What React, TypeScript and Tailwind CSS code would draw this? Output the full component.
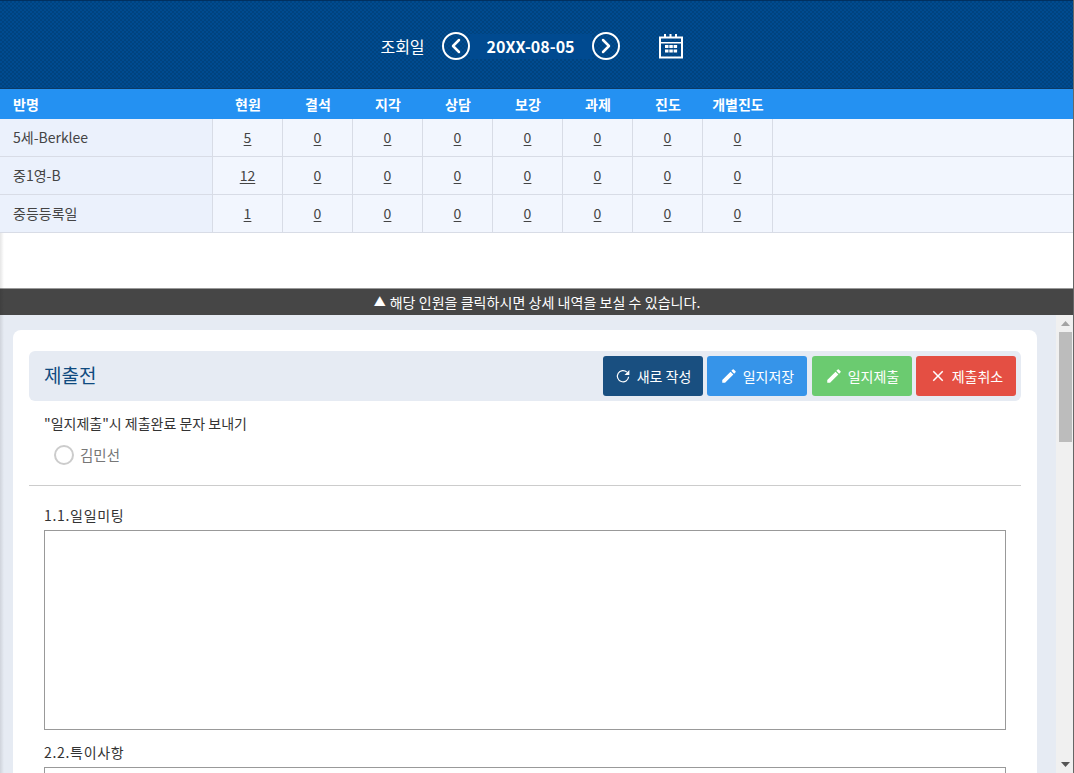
import { ChevronLeft, ChevronRight } from 'lucide-react';
import { MdClose, MdEdit } from 'react-icons/md';

const COLS = ['현원', '결석', '지각', '상담', '보강', '과제', '진도', '개별진도'];

const ROWS = [
  { name: '5세-Berklee', total: '5' },
  { name: '중1영-B', total: '12' },
  { name: '중등등록일', total: '1' },
];

function CalendarIcon() {
  return (
    <svg width="26" height="26" viewBox="0 0 26 26" fill="#fff" className="block">
      <path d="M1 3.500h5V1h2v2.500h3.500V1h2v2.500H17V1h2v2.500h6V25.500H1zM3 5.500v3.500h20V5.500zM3 10.500v13h20v-13z" fillRule="evenodd" />
      <rect x="7" y="12" width="3.500" height="3" />
      <rect x="11.300" y="12" width="3.500" height="3" />
      <rect x="15.600" y="12" width="3.500" height="3" />
      <rect x="7" y="16.500" width="3.500" height="3" />
      <rect x="11.300" y="16.500" width="3.500" height="3" />
      <rect x="15.600" y="16.500" width="3.500" height="3" />
    </svg>
  );
}

function RefreshIcon() {
  return (
    <svg width="18" height="18" viewBox="0 0 24 24" className="-ml-[1px]">
      <path d="M17.200 6.800A7.500 7.500 0 1 0 19.500 13" fill="none" stroke="#fff" strokeWidth="1.600" />
      <path d="M14 10.500h6.500V4z" fill="#fff" />
    </svg>
  );
}

function ActionButton({ color, icon, label }: { color: string; icon: React.ReactNode; label: string }) {
  return (
    <button type="button" className={`flex items-center justify-center gap-[5px] w-[100px] h-10 rounded-[3px] text-[14px] text-white ${color}`}>
      {icon}
      {label}
    </button>
  );
}

export default function App() {
  return (
    <div className="relative flex flex-col h-[773px] overflow-hidden bg-white text-[14px] text-[#333] font-['Noto_Sans_CJK_KR','Noto_Sans',sans-serif]">
      {/* Date bar */}
      <header className="h-[88px] shrink-0 flex items-center justify-center pt-[3px] pr-[10px] border-t border-[#003060] bg-[#004688] bg-[repeating-conic-gradient(#00437f_0_25%,#004b90_0_50%)] bg-[length:4px_4px] text-white">
        <span className="text-[16px] mr-[17px]">조회일</span>
        <button type="button" className="w-7 h-7 rounded-full border-2 border-white flex items-center justify-center">
          <ChevronLeft className="w-6 h-6" strokeWidth={2.5} />
        </button>
        <div className="w-[122px] h-[25px] bg-[#004a90] flex items-center justify-center text-[16px] font-bold">20XX-08-05</div>
        <button type="button" className="w-7 h-7 rounded-full border-2 border-white flex items-center justify-center">
          <ChevronRight className="w-6 h-6" strokeWidth={2.5} />
        </button>
        <span className="ml-[38px]"><CalendarIcon /></span>
      </header>

      {/* Attendance table */}
      <div className="h-[201px] shrink-0 border-b border-[#999]">
        <div className="flex h-[31px] items-center bg-[#2491f2] border-t border-[#0b3a66] text-white font-bold">
          <div className="w-[213px] pl-[13px]">반명</div>
          {COLS.map((c) => (
            <div key={c} className="w-[70px] text-center">{c}</div>
          ))}
        </div>
        {ROWS.map((r) => (
          <div key={r.name} className="flex h-[38px] border-b border-[#d8dce6] bg-[#f2f6fe]">
            <div className="w-[213px] pl-[13px] flex items-center bg-[#ebf1fc] border-r border-[#d8dce6] text-[#444]">{r.name}</div>
            {COLS.map((c, i) => (
              <div key={c} className="w-[70px] flex items-center justify-center border-r border-[#d8dce6]">
                <span className="underline underline-offset-2 text-[#444]">{i === 0 ? r.total : '0'}</span>
              </div>
            ))}
          </div>
        ))}
      </div>

      <div className="h-[26px] shrink-0 flex items-center justify-center gap-[4px] bg-[#464646] text-white text-[14px]">
        <span className="text-[12px]">▲</span>
        <span className="tracking-[0.05px]">해당 인원을 클릭하시면 상세 내역을 보실 수 있습니다.</span>
      </div>

      {/* Journal panel */}
      <div className="flex flex-1 min-h-0 bg-[#e6ebf3]">
        <div className="flex-1 min-w-0 overflow-hidden pt-[15px] pl-[13px] pr-[19px]">
          <div className="bg-white rounded-t-lg pt-[21px] px-4 h-[600px]">
            <div className="flex items-center justify-between h-[50px] bg-[#e6ebf3] rounded-md pl-[15px] pr-[5px]">
              <h2 className="text-[19px] text-[#0f4a7f] pb-[1px]">제출전</h2>
              <div className="flex gap-1">
                <ActionButton color="bg-[#194f80]" icon={<RefreshIcon />} label="새로 작성" />
                <ActionButton color="bg-[#3694e9]" icon={<MdEdit size={18} />} label="일지저장" />
                <ActionButton color="bg-[#6bcb70] ml-[1px]" icon={<MdEdit size={18} />} label="일지제출" />
                <ActionButton color="bg-[#e44f43]" icon={<MdClose size={18} />} label="제출취소" />
              </div>
            </div>
            <div className="pl-[15px] pt-[12px] leading-5">"일지제출"시 제출완료 문자 보내기</div>
            <div className="flex items-center gap-[6px] pl-[25px] mt-[12px] h-5 text-[14.500px] text-[#777]">
              <span className="w-5 h-5 rounded-full border-2 border-[#ccc] bg-white" />
              김민선
            </div>
            <hr className="mt-[20px] border-[#ccc]" />
            <div className="px-[15px]">
              <div className="mt-[19px] leading-5 tracking-[0.700px]">1.1.일일미팅</div>
              <textarea className="block mt-[5px] w-full h-[200px] border border-[#999] bg-white resize-none" />
              <div className="mt-[12px] leading-5 tracking-[0.700px]">2.2.특이사항</div>
              <textarea className="block mt-[5px] w-full h-[200px] border border-[#999] bg-white resize-none" />
            </div>
          </div>
        </div>
        {/* Scrollbar */}
        <div className="w-[18px] shrink-0 flex flex-col items-center bg-[#f0f0f0]">
          <div className="h-[17px] flex items-center justify-center text-[#a3a3a3]">
            <svg width="9" height="5" viewBox="0 0 9 5" fill="currentColor"><path d="M4.500 0 9 5H0z" /></svg>
          </div>
          <div className="w-[13px] h-[110px] bg-[#bcbcbc]" />
          <div className="flex-1" />
          <div className="h-[17px] flex items-center justify-center text-[#555]">
            <svg width="9" height="5" viewBox="0 0 9 5" fill="currentColor"><path d="M0 0h9L4.500 5z" /></svg>
          </div>
        </div>
      </div>

      {/* Window edges */}
      <div className="absolute left-0 top-[233px] bottom-0 w-[4px] bg-gradient-to-r from-black/10 to-transparent pointer-events-none" />
      <div className="absolute right-0 top-0 bottom-0 w-px bg-[#666] pointer-events-none" />
    </div>
  );
}
